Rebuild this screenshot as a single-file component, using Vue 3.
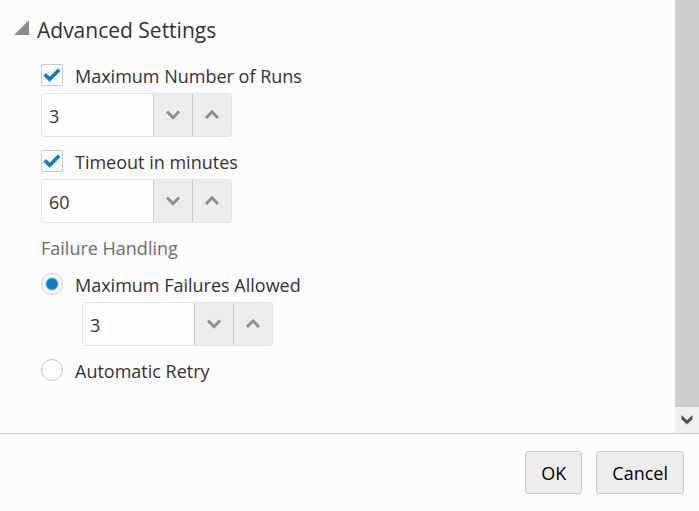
<script setup>
import { ref } from 'vue'

const expanded = ref(true)
const limitRuns = ref(true)
const limitTime = ref(true)
const handling = ref('max')
const values = ref({ runs: 3, timeout: 60, failures: 3 })
const step = (key, by) => {
  values.value[key] = Math.max(0, Number(values.value[key]) + by)
}
</script>

<template>
  <div class="dialog">
    <div class="body">
      <main class="content">
        <h2 class="heading">
          <button class="disclosure" type="button" :aria-expanded="expanded" @click="expanded = !expanded">
            <svg class="triangle" viewBox="0 0 16 16" aria-hidden="true"><path d="M0 15 15 0V15Z" /></svg>
            <span>Advanced Settings</span>
          </button>
        </h2>
        <div v-if="expanded" class="settings">
          <label class="choice">
            <input v-model="limitRuns" class="box" type="checkbox" />
            <svg class="tick" viewBox="0 0 22 22" aria-hidden="true"><path d="M3.7 10.4 8.6 15.2 18.2 5.7" /></svg>
            <span class="text">Maximum Number of Runs</span>
          </label>
          <div class="spinner">
            <input v-model="values.runs" class="number" type="text" inputmode="numeric" aria-label="Maximum Number of Runs" />
            <button class="step" type="button" aria-label="Decrease runs" @click="step('runs', -1)">
              <svg viewBox="0 0 16 12" aria-hidden="true"><path d="M2 2.5 8 8.7 14 2.5" /></svg>
            </button>
            <button class="step" type="button" aria-label="Increase runs" @click="step('runs', 1)">
              <svg viewBox="0 0 16 12" aria-hidden="true"><path d="M2 9 8 2.8 14 9" /></svg>
            </button>
          </div>

          <label class="choice">
            <input v-model="limitTime" class="box" type="checkbox" />
            <svg class="tick" viewBox="0 0 22 22" aria-hidden="true"><path d="M3.7 10.4 8.6 15.2 18.2 5.7" /></svg>
            <span class="text">Timeout in minutes</span>
          </label>
          <div class="spinner">
            <input v-model="values.timeout" class="number" type="text" inputmode="numeric" aria-label="Timeout in minutes" />
            <button class="step" type="button" aria-label="Decrease timeout" @click="step('timeout', -1)">
              <svg viewBox="0 0 16 12" aria-hidden="true"><path d="M2 2.5 8 8.7 14 2.5" /></svg>
            </button>
            <button class="step" type="button" aria-label="Increase timeout" @click="step('timeout', 1)">
              <svg viewBox="0 0 16 12" aria-hidden="true"><path d="M2 9 8 2.8 14 9" /></svg>
            </button>
          </div>

          <fieldset class="group">
            <legend class="legend">Failure Handling</legend>
            <label class="choice">
              <input v-model="handling" class="box radio" type="radio" name="handling" value="max" />
              <span class="text">Maximum Failures Allowed</span>
            </label>
            <div class="spinner nested">
              <input v-model="values.failures" class="number" type="text" inputmode="numeric" aria-label="Maximum Failures Allowed" />
              <button class="step" type="button" aria-label="Decrease failures" @click="step('failures', -1)">
                <svg viewBox="0 0 16 12" aria-hidden="true"><path d="M2 2.5 8 8.7 14 2.5" /></svg>
              </button>
              <button class="step" type="button" aria-label="Increase failures" @click="step('failures', 1)">
                <svg viewBox="0 0 16 12" aria-hidden="true"><path d="M2 9 8 2.8 14 9" /></svg>
              </button>
            </div>
            <label class="choice">
              <input v-model="handling" class="box radio" type="radio" name="handling" value="retry" />
              <span class="text">Automatic Retry</span>
            </label>
          </fieldset>
        </div>
      </main>
      <div class="scrollbar">
        <div class="thumb"></div>
        <button class="scroll-down" type="button" aria-label="Scroll down">
          <svg viewBox="0 0 12 10" aria-hidden="true"><path d="M.5 0 6 5.3 11.5 0V4.3L6 9.6.5 4.3Z" /></svg>
        </button>
      </div>
    </div>
    <footer class="footer">
      <button class="action" type="button">OK</button>
      <button class="action" type="button">Cancel</button>
    </footer>
  </div>
</template>

<style>
body {
  margin: 0;
  background: #fcfcfc;
}
</style>

<style scoped>
.dialog {
  display: flex;
  flex-direction: column;
  min-height: 100vh;
  background: #fcfcfc;
  color: #333;
  font-family: "Open Sans", "Noto Sans", sans-serif;
  font-size: 18px;
  line-height: 26px;
}
.dialog * {
  box-sizing: border-box;
}
button,
input {
  margin: 0;
  padding: 0;
  border: 0;
  border-radius: 0;
  font: inherit;
  color: inherit;
}
.body {
  display: flex;
  flex: 1;
}
.content {
  flex: 1;
  padding: 14px 14px 0;
}
.heading {
  margin: 0;
  font-size: 21px;
  font-weight: 400;
  line-height: 32px;
}
.disclosure {
  display: flex;
  gap: 7px;
  background: none;
}
.triangle {
  width: 16px;
  height: 16px;
  margin-top: 6px;
  fill: #8a8d91;
}
.settings {
  padding: 16px 0 0 27px;
}
.choice {
  display: grid;
  grid-template-columns: 22px 1fr;
  column-gap: 12px;
  align-items: center;
  width: fit-content;
  margin-bottom: 5px;
}
.text {
  padding-top: 2px;
  line-height: 24px;
}
.box {
  grid-area: 1 / 1;
  appearance: none;
  width: 22px;
  height: 22px;
  border: 1px solid #c4c8cb;
  border-radius: 2px;
  background: #fff;
}
.tick {
  grid-area: 1 / 1;
  width: 22px;
  height: 22px;
  fill: none;
  stroke: #0a7bc8;
  stroke-width: 3.6;
  pointer-events: none;
  visibility: hidden;
}
.box:checked + .tick {
  visibility: visible;
}
.radio {
  border-radius: 50%;
}
.radio:checked {
  background: radial-gradient(circle, #0a7bc8 5px, #fff 7px);
}
.spinner {
  display: grid;
  grid-template-columns: 111px 39px 39px;
  width: fit-content;
  height: 44px;
  margin-bottom: 11px;
  border: 1px solid #e4e4e4;
  border-radius: 3px;
  overflow: hidden;
}
.nested {
  margin-left: 41px;
}
.number {
  padding: 2px 7px 0;
  background: #fdfdfd;
}
.step {
  display: grid;
  place-items: center;
  border-left: 1px solid #c8c8c8;
  background: #ececec;
}
.step svg {
  width: 16px;
  height: 12px;
  fill: none;
  stroke: #8a8d91;
  stroke-width: 3;
}
.group {
  min-width: 0;
  margin: 0;
  padding: 0;
  border: 0;
}
.legend {
  margin-bottom: 10px;
  padding: 1px 0 0;
  color: #6d6d6d;
}
.scrollbar {
  display: flex;
  flex-direction: column;
  width: 24px;
  background: #f0f0f0;
}
.thumb {
  flex: 1;
  background: #cdcdcd;
}
.scroll-down {
  display: grid;
  place-items: center;
  height: 26px;
  background: #f0f0f0;
}
.scroll-down svg {
  width: 12px;
  height: 10px;
  fill: #505050;
}
.footer {
  display: flex;
  justify-content: flex-end;
  gap: 14px;
  padding: 17px 15px;
  border-top: 1px solid #c8c8c8;
}
.action {
  height: 43px;
  padding: 0 15px;
  border: 1px solid #c8c8c8;
  border-radius: 3px;
  background: #ececec;
  color: #000;
}
</style>
